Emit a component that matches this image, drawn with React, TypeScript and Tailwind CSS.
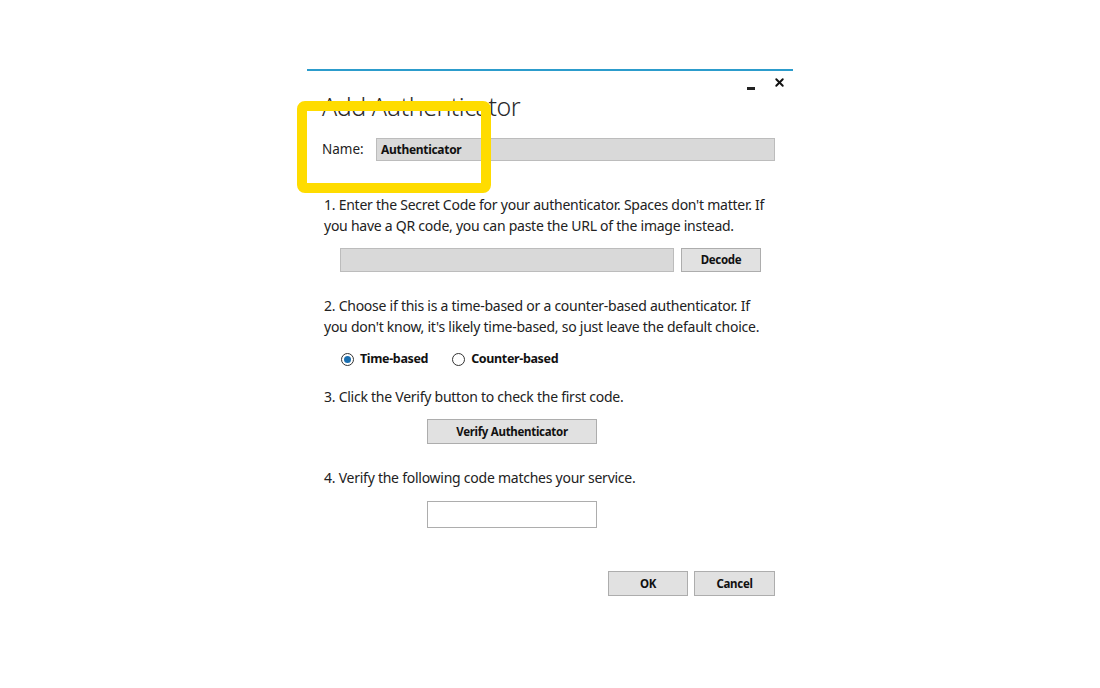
import { X } from 'lucide-react';

const font = { fontFamily: '"Noto Sans", "Open Sans", sans-serif' };

function GrayButton({ label, className }: { label: string; className: string }) {
  return (
    <button
      type="button"
      className={`flex items-center justify-center border border-[#adadad] bg-[#e1e1e1] text-[11.5px] font-bold tracking-[-0.3px] text-[#111] ${className}`}
    >
      {label}
    </button>
  );
}

function Radio({ checked, label }: { checked?: boolean; label: string }) {
  return (
    <label className="flex items-center gap-[6px]">
      <span className="flex h-[13px] w-[13px] items-center justify-center rounded-full border border-[#333] bg-white">
        {checked && <span className="h-[7px] w-[7px] rounded-full bg-[#1a6fb0]" />}
      </span>
      <span className="text-[12.5px] font-bold tracking-[-0.35px] text-[#111]">{label}</span>
    </label>
  );
}

export default function App() {
  return (
    <div className="min-h-[688px] w-full bg-white pt-[69px]" style={font}>
      <div className="relative mx-auto h-[548px] w-[486px] border-t-2 border-[#2c9ccc] bg-white">
        <div className="flex h-[20px] items-end justify-end gap-[18px] pr-[7px]">
          <span className="mb-[1px] h-[3px] w-[8px] bg-[#222]" />
          <X className="mb-[2px] h-[13px] w-[13px] text-[#111]" strokeWidth={3.5} />
        </div>

        <h1 className="ml-[15px] mt-[-2px] text-[25px] font-light leading-[34px] tracking-[-0.5px] text-[#2a2a2a]">
          Add Authenticator
        </h1>

        <div className="ml-[15px] mr-[18px] mt-[15px] flex items-center">
          <span className="w-[54px] text-[13.5px] text-[#222]">Name:</span>
          <div className="flex h-[23px] flex-1 items-center border border-[#bcbcbc] bg-[#d9d9d9] px-[4px] text-[12px] font-bold tracking-[-0.3px] text-[#111]">
            Authenticator
          </div>
        </div>

        <div className="ml-[17px] mr-[20px] mt-[33px] text-[14px] leading-[21px] tracking-[-0.25px] text-[#222]">
          1. Enter the Secret Code for your authenticator. Spaces don't matter. If you have a QR code, you can paste the URL of the image instead.
        </div>

        <div className="ml-[33px] mt-[12px] flex gap-[7px]">
          <div className="h-[24px] w-[334px] border border-[#bcbcbc] bg-[#d9d9d9]" />
          <GrayButton label="Decode" className="h-[24px] w-[80px]" />
        </div>

        <div className="ml-[17px] mr-[20px] mt-[23px] text-[14px] leading-[21px] tracking-[-0.25px] text-[#222]">
          2. Choose if this is a time-based or a counter-based authenticator. If you don't know, it's likely time-based, so just leave the default choice.
        </div>

        <div className="ml-[34px] mt-[13px] flex gap-[24px]">
          <Radio checked label="Time-based" />
          <Radio label="Counter-based" />
        </div>

        <div className="ml-[17px] mt-[17px] text-[14px] leading-[21px] tracking-[-0.25px] text-[#222]">
          3. Click the Verify button to check the first code.
        </div>

        <div className="ml-[120px] mt-[12px]">
          <GrayButton label="Verify Authenticator" className="h-[25px] w-[170px]" />
        </div>

        <div className="ml-[17px] mt-[23px] text-[14px] leading-[21px] tracking-[-0.25px] text-[#222]">
          4. Verify the following code matches your service.
        </div>

        <div className="ml-[120px] mt-[13px] h-[27px] w-[170px] border border-[#adadad] bg-white" />

        <div className="mr-[18px] mt-[43px] flex justify-end gap-[6px]">
          <GrayButton label="OK" className="h-[25px] w-[80px]" />
          <GrayButton label="Cancel" className="h-[25px] w-[81px]" />
        </div>

        <div className="pointer-events-none absolute left-[-10px] top-[30px] h-[92px] w-[194px] rounded-[8px] border-[10px] border-[#ffdc00]" />
      </div>
    </div>
  );
}
